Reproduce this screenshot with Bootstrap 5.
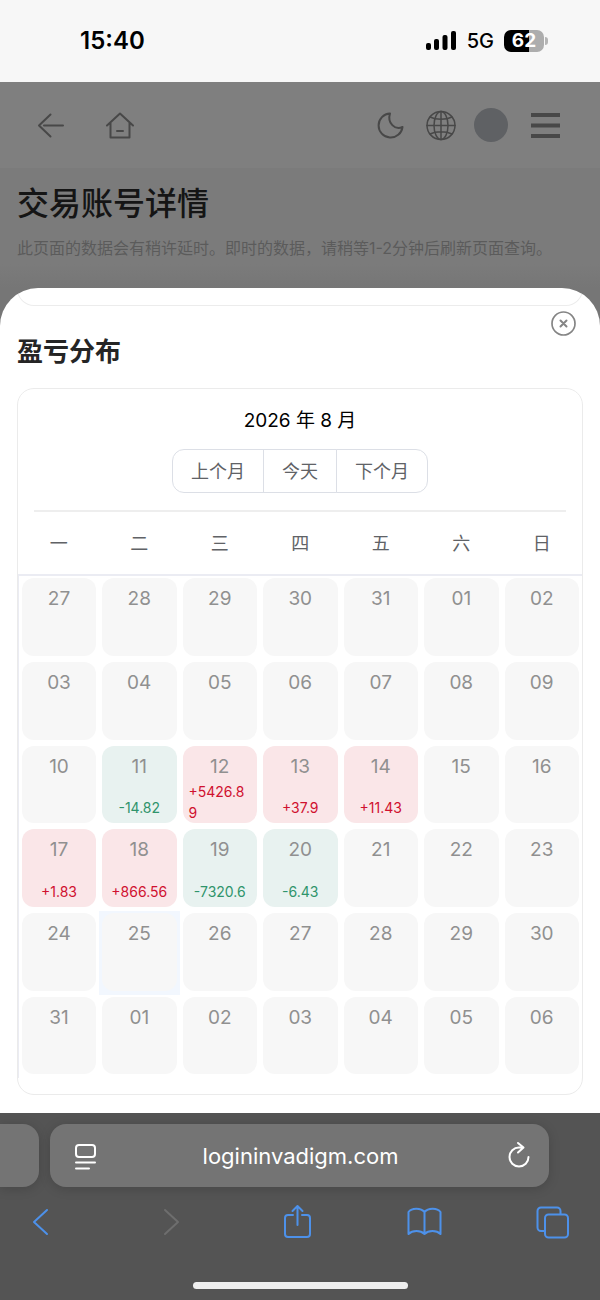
<!DOCTYPE html>
<html lang="zh-CN">
<head>
<meta charset="utf-8">
<meta name="viewport" content="width=device-width, initial-scale=1">
<title>交易账号详情</title>
<link href="https://cdn.jsdelivr.net/npm/bootstrap@5.3.0/dist/css/bootstrap.min.css" rel="stylesheet">
<style>
  body { font-family: Inter, "Noto Sans CJK SC", sans-serif; background: #545454; color: #000; }
  svg { display: block; fill: none; stroke: currentColor; stroke-linecap: round; stroke-linejoin: round; }
  .icon-btn { background: none; border: 0; padding: 0; color: inherit; }

  .status-bar { height: 82px; background: #f7f7f7; padding: 0 52px 0 80px; }
  .clock { font-size: 24px; line-height: 32px; font-weight: 600; }
  .network { font-size: 20px; line-height: 32px; font-weight: 500; margin: 0 10px; }
  .battery { width: 40px; height: 22px; border-radius: 7px; color: #fff; font-size: 19px; line-height: 22px; font-weight: 700;
    background: linear-gradient(90deg, #000 62%, #adadad 62%); }
  .battery-tip { width: 3px; height: 8px; border-radius: 0 3px 3px 0; background: #b5b5b5; margin-left: 1px; }

  .backdrop-page { background: #7b7b7b; color: #484848; }
  .top-nav { height: 86px; background: #7f7f7f; padding: 0 34px; }
  .top-nav .left-icons { gap: 35px; }
  .avatar { width: 34px; height: 34px; background: #5f6164; }
  .page-head { padding: 12px 17px 24px; height: 120px; background: linear-gradient(#7b7b7b 80%, #767676); }
  .page-head h1 { font-size: 32px; line-height: 48px; font-weight: 500; color: #151515; margin: 0 0 8px; }
  .page-head p { font-size: 16px; line-height: 24px; color: #5b5b5b; margin: 0; white-space: nowrap; }

  .sheet-wrap { background: #767676; }
  .sheet { background: #fff; border-radius: 38px 38px 0 0; overflow: hidden; padding: 0 17px 18px; }
  .previous-panel { height: 18px; border: 1px solid #ececec; border-top: 0; border-radius: 0 0 17px 17px; }
  .close-btn { top: 22px; right: 23px; color: #858585; }
  .sheet h2 { font-size: 26px; line-height: 36px; font-weight: 700; color: #252525; margin: 28px 0 18px; }

  .calendar { border: 1px solid #ebebeb; border-radius: 17px; padding-bottom: 16px; }
  .calendar-head { margin: 0 16px; padding: 19px 0 17px; border-bottom: 2px solid #eee; }
  .month { font-size: 19px; line-height: 26px; margin-bottom: 15px; }
  .month-switch .btn { --bs-btn-color: #606266; --bs-btn-border-color: #dcdfe6; --bs-btn-border-radius: 12px;
    --bs-btn-font-size: 18px; --bs-btn-hover-bg: #ecf5ff; --bs-btn-bg: #fff;
    padding: 10px 18px 8px; line-height: 24px; }
  .days { table-layout: fixed; width: 100%; margin: 0; }
  .days th { height: 63px; padding: 2px 0 0; text-align: center; font-size: 18px; line-height: 26px; font-weight: 400; color: #606266; }
  .days tbody { border-top: 2px solid #ebecf3; border-left: 1px solid #ebecf3; }
  .days td { padding: 2px 3px 4px; }
  .days td.today { background: #f2f7fe; }
  .day { height: 78px; border-radius: 12px; background: #f7f7f7; padding: 7px 6px 5px; color: #909090;
    font-size: 19px; line-height: 28px; text-align: center; }
  .days tr:nth-child(3n) .day { height: 77px; }
  .amount { font-size: 14px; line-height: 21px; text-align: left; word-break: break-all; }
  .gain { background: #fae6e8; }
  .gain .amount { color: #d0112f; }
  .loss { background: #e8f2f0; }
  .loss .amount { color: #2f946b; }

  .browser { background: #545454; padding-top: 11px; }
  .address-row { gap: 11px; padding-right: 51px; }
  .tab-pill { height: 63px; background: #747474; border-radius: 16px; box-shadow: 0 2px 12px rgba(0,0,0,.16); }
  .tab-prev { width: 39px; border-radius: 0 16px 16px 0; }
  .tab-main { padding: 0 16px 0 18px; color: #fff; }
  .address { min-width: 0; background: none; border: 0; padding: 0; color: #fff; text-align: center; font-size: 22px; line-height: 32px; }
  .tools { padding: 17px 30px 0 23px; color: #4d91ea; }
  .tools .disabled-tool { color: #6e6e6e; }
  .home-line { width: 215px; height: 7px; background: #efefef; margin: 42px auto 11px; }
</style>
</head>
<body>
<header class="status-bar d-flex align-items-center justify-content-between">
  <span class="clock">15:40</span>
  <div class="d-flex align-items-center">
    <svg width="32" height="22" viewBox="0 0 32 22" style="fill:#000;stroke:none" aria-hidden="true">
      <rect x="1" y="13" width="5" height="7" rx="2"/><rect x="9" y="9" width="5" height="11" rx="2"/><rect x="17.500" y="5" width="5" height="15" rx="2"/><rect x="26" y="1" width="5" height="19" rx="2"/>
    </svg>
    <span class="network">5G</span>
    <span class="battery text-center">62</span><span class="battery-tip"></span>
  </div>
</header>

<div class="backdrop-page">
  <nav class="top-nav d-flex align-items-center justify-content-between">
    <div class="left-icons d-flex">
      <button class="icon-btn" aria-label="返回"><svg width="34" height="34" viewBox="0 0 34 34" stroke-width="2"><path d="M29 17.500H10M16.500 6.500 5 17.500l11.500 11"/></svg></button>
      <button class="icon-btn" aria-label="首页"><svg width="34" height="34" viewBox="0 0 34 34" stroke-width="2"><path d="M4 17.500 17 5.500l13 12M7.500 15v14.500h19V15M14 23h6"/></svg></button>
    </div>
    <div class="d-flex align-items-center gap-3">
      <button class="icon-btn" aria-label="深色模式"><svg width="34" height="34" viewBox="0 0 34 34" stroke-width="2"><path d="M16 5.500A12 12 0 1 0 28.500 19C21 22.500 13 15 16 5.500Z"/></svg></button>
      <button class="icon-btn" aria-label="语言"><svg width="34" height="34" viewBox="0 0 34 34" stroke-width="1.500"><circle cx="17" cy="17.500" r="14"/><ellipse cx="17" cy="17.500" rx="7" ry="14"/><path d="M17 3.500v28M3 17.500h28M6 9c6 3 16 3 22 0M6 26c6-3 16-3 22 0"/></svg></button>
      <button class="icon-btn avatar rounded-circle" aria-label="账户"></button>
      <button class="icon-btn" aria-label="菜单"><svg width="42" height="34" viewBox="0 0 42 34" stroke-width="4" style="stroke-linecap:butt"><path d="M7 7h29M7 17.500h29M7 28h29"/></svg></button>
    </div>
  </nav>
  <div class="page-head">
    <h1>交易账号详情</h1>
    <p>此页面的数据会有稍许延时。即时的数据，请稍等1-2分钟后刷新页面查询。</p>
  </div>
</div>

<div class="sheet-wrap">
<main class="sheet position-relative">
  <div class="previous-panel"></div>
  <button class="icon-btn close-btn position-absolute" aria-label="关闭"><svg width="27" height="27" viewBox="0 0 27 27" stroke-width="2"><circle cx="13.500" cy="13.500" r="11.500" stroke-width="1.700"/><path d="m10.500 10.500 6 6m0-6-6 6"/></svg></button>
  <h2>盈亏分布</h2>
  <section class="calendar">
    <div class="calendar-head text-center">
      <div class="month">2026 年 8 月</div>
      <div class="btn-group month-switch" role="group" aria-label="切换月份">
        <button class="btn">上个月</button><button class="btn">今天</button><button class="btn">下个月</button>
      </div>
    </div>
    <table class="days">
      <thead><tr><th>一</th><th>二</th><th>三</th><th>四</th><th>五</th><th>六</th><th>日</th></tr></thead>
      <tbody>
        <tr><td><div class="day">27</div></td><td><div class="day">28</div></td><td><div class="day">29</div></td><td><div class="day">30</div></td><td><div class="day">31</div></td><td><div class="day">01</div></td><td><div class="day">02</div></td></tr>
        <tr><td><div class="day">03</div></td><td><div class="day">04</div></td><td><div class="day">05</div></td><td><div class="day">06</div></td><td><div class="day">07</div></td><td><div class="day">08</div></td><td><div class="day">09</div></td></tr>
        <tr><td><div class="day">10</div></td>
          <td><div class="day loss d-flex flex-column align-items-center">11<span class="amount mt-auto">-14.82</span></div></td>
          <td><div class="day gain d-flex flex-column align-items-center">12<span class="amount mt-auto">+5426.89</span></div></td>
          <td><div class="day gain d-flex flex-column align-items-center">13<span class="amount mt-auto">+37.9</span></div></td>
          <td><div class="day gain d-flex flex-column align-items-center">14<span class="amount mt-auto">+11.43</span></div></td>
          <td><div class="day">15</div></td><td><div class="day">16</div></td></tr>
        <tr><td><div class="day gain d-flex flex-column align-items-center">17<span class="amount mt-auto">+1.83</span></div></td>
          <td><div class="day gain d-flex flex-column align-items-center">18<span class="amount mt-auto">+866.56</span></div></td>
          <td><div class="day loss d-flex flex-column align-items-center">19<span class="amount mt-auto">-7320.6</span></div></td>
          <td><div class="day loss d-flex flex-column align-items-center">20<span class="amount mt-auto">-6.43</span></div></td>
          <td><div class="day">21</div></td><td><div class="day">22</div></td><td><div class="day">23</div></td></tr>
        <tr><td><div class="day">24</div></td><td class="today"><div class="day">25</div></td><td><div class="day">26</div></td><td><div class="day">27</div></td><td><div class="day">28</div></td><td><div class="day">29</div></td><td><div class="day">30</div></td></tr>
        <tr><td><div class="day">31</div></td><td><div class="day">01</div></td><td><div class="day">02</div></td><td><div class="day">03</div></td><td><div class="day">04</div></td><td><div class="day">05</div></td><td><div class="day">06</div></td></tr>
      </tbody>
    </table>
  </section>
</main>
</div>

<footer class="browser">
  <div class="address-row d-flex">
    <div class="tab-pill tab-prev"></div>
    <div class="tab-pill tab-main d-flex align-items-center flex-grow-1">
      <button class="icon-btn" aria-label="页面菜单"><svg width="34" height="34" viewBox="0 0 34 34" stroke-width="2"><rect x="8" y="6" width="19" height="12" rx="3"/><path d="M8 23.500h19M8 29.500h13"/></svg></button>
      <input class="address flex-grow-1" type="text" value="logininvadigm.com" aria-label="网址">
      <button class="icon-btn" aria-label="刷新"><svg width="34" height="34" viewBox="-6 0 34 34" stroke-width="2"><path d="M17 8.500h-3A9.500 9.500 0 1 0 23.500 18M13 4l5.500 4.500L13 13.500"/></svg></button>
    </div>
  </div>
  <div class="tools d-flex justify-content-between">
    <button class="icon-btn" aria-label="后退"><svg width="36" height="36" viewBox="0 0 36 36" stroke-width="2"><path d="M24 6 11 18l13 12"/></svg></button>
    <button class="icon-btn disabled-tool" aria-label="前进" disabled><svg width="36" height="36" viewBox="0 0 36 36" stroke-width="2"><path d="m14 6 13 12-13 12"/></svg></button>
    <button class="icon-btn" aria-label="分享"><svg width="36" height="36" viewBox="0 0 36 36" stroke-width="2"><path d="M14 11H9a3 3 0 0 0-3 3v16a3 3 0 0 0 3 3h19a3 3 0 0 0 3-3V14a3 3 0 0 0-3-3h-5M18.500 21V2M13.500 7l5-5 5 5"/></svg></button>
    <button class="icon-btn" aria-label="书签"><svg width="36" height="36" viewBox="0 0 36 36" stroke-width="2"><path d="M18.500 8C15 4 6 3.500 2.500 8v22c4-4 12-4 16 0 4-4 12-4 16 0V8C31 3.500 22 4 18.500 8v22"/></svg></button>
    <button class="icon-btn" aria-label="标签页"><svg width="36" height="36" viewBox="0 0 36 36" stroke-width="2"><path d="M10 27H7a3.500 3.500 0 0 1-3.500-3.500V7A3.500 3.500 0 0 1 7 3.500h16A3.500 3.500 0 0 1 26.500 7v3"/><rect x="11" y="10.500" width="23" height="23" rx="3.500"/></svg></button>
  </div>
  <div class="home-line rounded-pill"></div>
</footer>
<script src="https://cdn.jsdelivr.net/npm/bootstrap@5.3.0/dist/js/bootstrap.bundle.min.js"></script>
</body>
</html>
